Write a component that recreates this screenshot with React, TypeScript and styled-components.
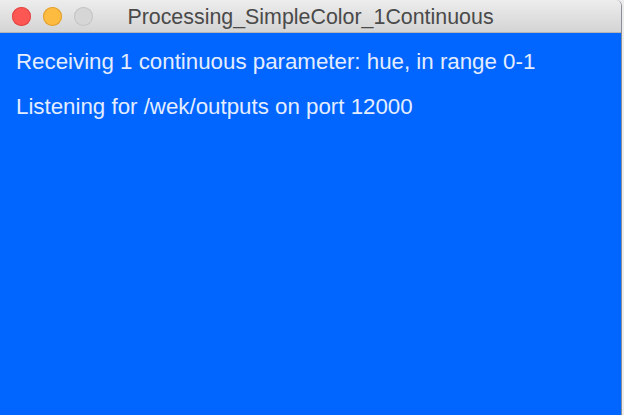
import React from 'react';
import styled, { createGlobalStyle } from 'styled-components';

const GlobalStyle = createGlobalStyle`
  html, body {
    margin: 0;
    padding: 0;
    background: #ececec;
  }
`;

const Window = styled.div`
  width: 622px;
  height: 415px;
  display: flex;
  flex-direction: column;
  border-right: 1px solid #8a8f99;
  border-radius: 6px 6px 0 0;
  overflow: hidden;
  box-sizing: border-box;
`;

const TitleBar = styled.div`
  height: 33px;
  flex: 0 0 33px;
  display: flex;
  align-items: center;
  position: relative;
  background: linear-gradient(#ededed, #d4d4d4);
  border-bottom: 1px solid #b4b4b4;
  box-sizing: border-box;
`;

const Lights = styled.div`
  display: flex;
  gap: 12px;
  padding-left: 12px;
`;

const Light = styled.span<{ $fill: string; $edge: string }>`
  width: 19px;
  height: 19px;
  border-radius: 50%;
  background: ${p => p.$fill};
  box-shadow: inset 0 0 0 1px ${p => p.$edge};
`;

const Title = styled.div`
  position: absolute;
  left: 0;
  right: 0;
  top: 5px;
  text-align: center;
  font-family: "Liberation Sans", Arial, sans-serif;
  font-size: 21.4px;
  line-height: 24px;
  color: #4a4a4a;
  pointer-events: none;
`;

const Canvas = styled.div`
  flex: 1;
  background: #0066ff;
  padding: 16px 16px;
  display: flex;
  flex-direction: column;
  gap: 18.5px;
`;

const Line = styled.div`
  font-family: "Liberation Sans", Arial, sans-serif;
  font-size: 22.3px;
  line-height: 26px;
  color: #e4edff;
`;

export default function App() {
  return (
    <>
      <GlobalStyle />
      <Window>
        <TitleBar>
          <Lights>
            <Light $fill="#fc5753" $edge="#df4744" />
            <Light $fill="#fdbc40" $edge="#de9f34" />
            <Light $fill="#d6d6d6" $edge="#c4c4c4" />
          </Lights>
          <Title>Processing_SimpleColor_1Continuous</Title>
        </TitleBar>
        <Canvas>
          <Line>Receiving 1 continuous parameter: hue, in range 0-1</Line>
          <Line>Listening for /wek/outputs on port 12000</Line>
        </Canvas>
      </Window>
    </>
  );
}
